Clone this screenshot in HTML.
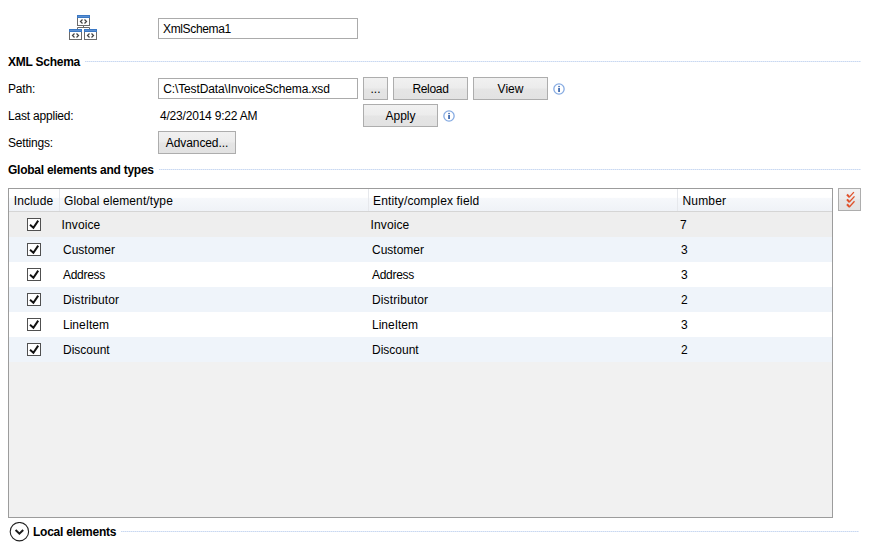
<!DOCTYPE html>
<html>
<head>
<meta charset="utf-8">
<style>
html,body{margin:0;padding:0;background:#fff;}
body{width:870px;height:554px;position:relative;overflow:hidden;font-family:"Liberation Sans",sans-serif;font-size:12px;color:#000;}
.t{position:absolute;white-space:pre;line-height:14px;height:14px;}
.b{font-weight:bold;}
.box{position:absolute;box-sizing:border-box;border:1px solid #ababab;background:#fff;}
.btn{position:absolute;box-sizing:border-box;border:1px solid #adadad;background:#e3e3e3;text-align:center;line-height:23px;white-space:pre;background:linear-gradient(#f1f1f1 0,#ececec 48%,#e5e5e5 52%,#e2e2e2 100%);}
.hl{position:absolute;height:1px;background:repeating-linear-gradient(90deg,#c9d8f1 0,#c9d8f1 1px,#e1eaf8 1px,#e1eaf8 2px);}
.row{position:absolute;left:9px;width:823px;height:25px;}
.cb{position:absolute;left:27px;width:14px;height:13px;box-sizing:border-box;border:1px solid #505050;background:#fff;}
.cb svg{position:absolute;left:0;top:0;}
.info{position:absolute;width:12px;height:12px;}
</style>
</head>
<body>
<!-- icon -->
<svg style="position:absolute;left:68px;top:14px" width="30" height="28" viewBox="0 0 30 28">
 <g fill="#fff" stroke="#6a6a6a" stroke-width="1">
  <rect x="9.5" y="1.5" width="12" height="10"/>
  <rect x="1.5" y="15.5" width="12" height="10"/>
  <rect x="16.5" y="15.5" width="12" height="10"/>
 </g>
 <g fill="#3b78c4">
  <rect x="9" y="1" width="13" height="3"/>
  <rect x="1" y="15" width="13" height="3"/>
  <rect x="16" y="15" width="13" height="3"/>
 </g>
 <g fill="#5b90d2">
  <rect x="10" y="2" width="11" height="1"/>
  <rect x="2" y="16" width="11" height="1"/>
  <rect x="17" y="16" width="11" height="1"/>
 </g>
 <path d="M15.5 12v1.5M9.5 15v-1.5h12v1.5" fill="none" stroke="#6a6a6a" stroke-width="1"/>
 <g fill="none" stroke="#444" stroke-width="1.25">
  <path d="M14.5 5.5l-2 2 2 2M16.5 5.5l2 2-2 2"/>
  <path d="M6.5 19.5l-2 2 2 2M8.5 19.5l2 2-2 2"/>
  <path d="M21.5 19.5l-2 2 2 2M23.5 19.5l2 2-2 2"/>
 </g>
</svg>

<div class="box" style="left:158px;top:18px;width:200px;height:21px"></div>
<div class="t" id="t_name" style="left:163px;top:22px;letter-spacing:-0.35px">XmlSchema1</div>

<div class="t b" id="t_xml" style="left:8px;top:55px;letter-spacing:-0.25px">XML Schema</div>
<div class="hl" style="left:85px;top:61px;width:776px"></div>

<div class="t" id="t_path" style="left:8px;top:82px;letter-spacing:-0.2px">Path:</div>
<div class="box" style="left:158px;top:78px;width:200px;height:21px"></div>
<div class="t" id="t_pathv" style="left:163.2px;top:82px;letter-spacing:-0.12px">C:\TestData\InvoiceSchema.xsd</div>
<div class="btn" id="b_dots" style="left:363px;top:77px;width:25px;height:23px">...</div>
<div class="btn" id="b_reload" style="left:393px;top:77px;width:75px;height:23px;letter-spacing:-0.3px">Reload</div>
<div class="btn" id="b_view" style="left:473px;top:77px;width:75px;height:23px">View</div>
<svg class="info" style="left:553px;top:83px" viewBox="0 0 12 12"><circle cx="6" cy="6" r="5.15" fill="#fff" stroke="#86abe2" stroke-width="1.3"/><rect x="5.2" y="5" width="1.7" height="4" fill="#3562ab"/><rect x="5.2" y="2.9" width="1.7" height="1.3" fill="#4a74b8"/></svg>

<div class="t" id="t_last" style="left:8px;top:109px;letter-spacing:-0.2px">Last applied:</div>
<div class="t" id="t_date" style="left:160px;top:109px;letter-spacing:-0.2px">4/23/2014 9:22 AM</div>
<div class="btn" id="b_apply" style="left:363px;top:104px;width:75px;height:23px">Apply</div>
<svg class="info" style="left:443px;top:110px" viewBox="0 0 12 12"><circle cx="6" cy="6" r="5.15" fill="#fff" stroke="#86abe2" stroke-width="1.3"/><rect x="5.2" y="5" width="1.7" height="4" fill="#3562ab"/><rect x="5.2" y="2.9" width="1.7" height="1.3" fill="#4a74b8"/></svg>

<div class="t" id="t_set" style="left:8px;top:136px;letter-spacing:-0.2px">Settings:</div>
<div class="btn" id="b_adv" style="left:158px;top:131px;width:78px;height:23px;letter-spacing:-0.1px">Advanced...</div>

<div class="t b" id="t_glob" style="left:8px;top:163px;letter-spacing:-0.25px">Global elements and types</div>
<div class="hl" style="left:159px;top:169px;width:702px"></div>

<!-- table -->
<div style="position:absolute;left:8px;top:188px;width:825px;height:330px;box-sizing:border-box;border:1px solid #9c9c9c;background:#f1f1f1"></div>
<div style="position:absolute;left:9px;top:189px;width:823px;height:22px;background:linear-gradient(#fff 0,#fff 38%,#f6f8fb 42%,#eff2f7 100%)"></div>
<div style="position:absolute;left:9px;top:211px;width:823px;height:1px;background:#d5d5d5"></div>
<div style="position:absolute;left:59px;top:189px;width:1px;height:22px;background:#e6e8ec"></div>
<div style="position:absolute;left:368px;top:189px;width:1px;height:22px;background:#e6e8ec"></div>
<div style="position:absolute;left:677px;top:189px;width:1px;height:22px;background:#e6e8ec"></div>
<div class="t" id="h1" style="left:13.8px;top:194px;letter-spacing:0.1px">Include</div>
<div class="t" id="h2" style="left:64.1px;top:194px;letter-spacing:0.11px">Global element/type</div>
<div class="t" id="h3" style="left:373px;top:194px;letter-spacing:0.15px">Entity/complex field</div>
<div class="t" id="h4" style="left:682.4px;top:194px;letter-spacing:0.2px">Number</div>

<div class="row" style="top:212px;background:#eeeeee"></div>
<div class="row" style="top:237px;background:#eff4fa"></div>
<div class="row" style="top:262px;background:#fff"></div>
<div class="row" style="top:287px;background:#eff4fa"></div>
<div class="row" style="top:312px;background:#fff"></div>
<div class="row" style="top:337px;background:#eff4fa"></div>

<div class="cb" style="top:218px"><svg width="12" height="11" viewBox="0 0 12 11"><path d="M2 5.8L5.4 8.7 10.2 1.6" fill="none" stroke="#111" stroke-width="2"/></svg></div>
<div class="cb" style="top:243px"><svg width="12" height="11" viewBox="0 0 12 11"><path d="M2 5.8L5.4 8.7 10.2 1.6" fill="none" stroke="#111" stroke-width="2"/></svg></div>
<div class="cb" style="top:268px"><svg width="12" height="11" viewBox="0 0 12 11"><path d="M2 5.8L5.4 8.7 10.2 1.6" fill="none" stroke="#111" stroke-width="2"/></svg></div>
<div class="cb" style="top:293px"><svg width="12" height="11" viewBox="0 0 12 11"><path d="M2 5.8L5.4 8.7 10.2 1.6" fill="none" stroke="#111" stroke-width="2"/></svg></div>
<div class="cb" style="top:318px"><svg width="12" height="11" viewBox="0 0 12 11"><path d="M2 5.8L5.4 8.7 10.2 1.6" fill="none" stroke="#111" stroke-width="2"/></svg></div>
<div class="cb" style="top:343px"><svg width="12" height="11" viewBox="0 0 12 11"><path d="M2 5.8L5.4 8.7 10.2 1.6" fill="none" stroke="#111" stroke-width="2"/></svg></div>

<div class="t" style="left:61.6px;top:218px;letter-spacing:0.1px">Invoice</div>
<div class="t" style="left:370.6px;top:218px;letter-spacing:0.1px">Invoice</div>
<div class="t" style="left:680px;top:218px">7</div>
<div class="t" style="left:63px;top:243px">Customer</div>
<div class="t" style="left:372px;top:243px">Customer</div>
<div class="t" style="left:681px;top:243px">3</div>
<div class="t" style="left:63px;top:268px;letter-spacing:-0.3px">Address</div>
<div class="t" style="left:372px;top:268px;letter-spacing:-0.3px">Address</div>
<div class="t" style="left:681px;top:268px">3</div>
<div class="t" style="left:63px;top:293px;letter-spacing:0.14px">Distributor</div>
<div class="t" style="left:372px;top:293px;letter-spacing:0.14px">Distributor</div>
<div class="t" style="left:681px;top:293px">2</div>
<div class="t" style="left:63px;top:318px">LineItem</div>
<div class="t" style="left:372px;top:318px">LineItem</div>
<div class="t" style="left:681px;top:318px">3</div>
<div class="t" style="left:63px;top:343px">Discount</div>
<div class="t" style="left:372px;top:343px">Discount</div>
<div class="t" style="left:681px;top:343px">2</div>

<!-- side button -->
<div class="btn" style="left:838px;top:188px;width:23px;height:23px"></div>
<svg style="position:absolute;left:845px;top:191px" width="12" height="18" viewBox="0 0 12 18"><g fill="none" stroke="#e0512a"><path d="M2 3.5L4.4 6.1" stroke-width="2"/><path d="M4.1 6.4L8.9 1.1" stroke-width="1.3"/><path d="M2 8.4L4.4 11" stroke-width="2"/><path d="M4.1 11.3L9.5 5.4" stroke-width="1.3"/><path d="M2 13.3L4.4 15.9" stroke-width="2"/><path d="M4.1 16.2L9.5 10.3" stroke-width="1.3"/></g></svg>

<!-- local elements -->
<svg style="position:absolute;left:9px;top:522px" width="21" height="20" viewBox="0 0 21 20"><circle cx="10.4" cy="9.7" r="9.2" fill="#fff" stroke="#222" stroke-width="1.1"/><path d="M6.6 8l3.8 3.7 3.8-3.7" fill="none" stroke="#1a1a1a" stroke-width="2"/></svg>
<div class="t b" id="t_loc" style="left:33px;top:525px;letter-spacing:-0.25px">Local elements</div>
<div class="hl" style="left:121px;top:531px;width:738px"></div>
</body>
</html>
